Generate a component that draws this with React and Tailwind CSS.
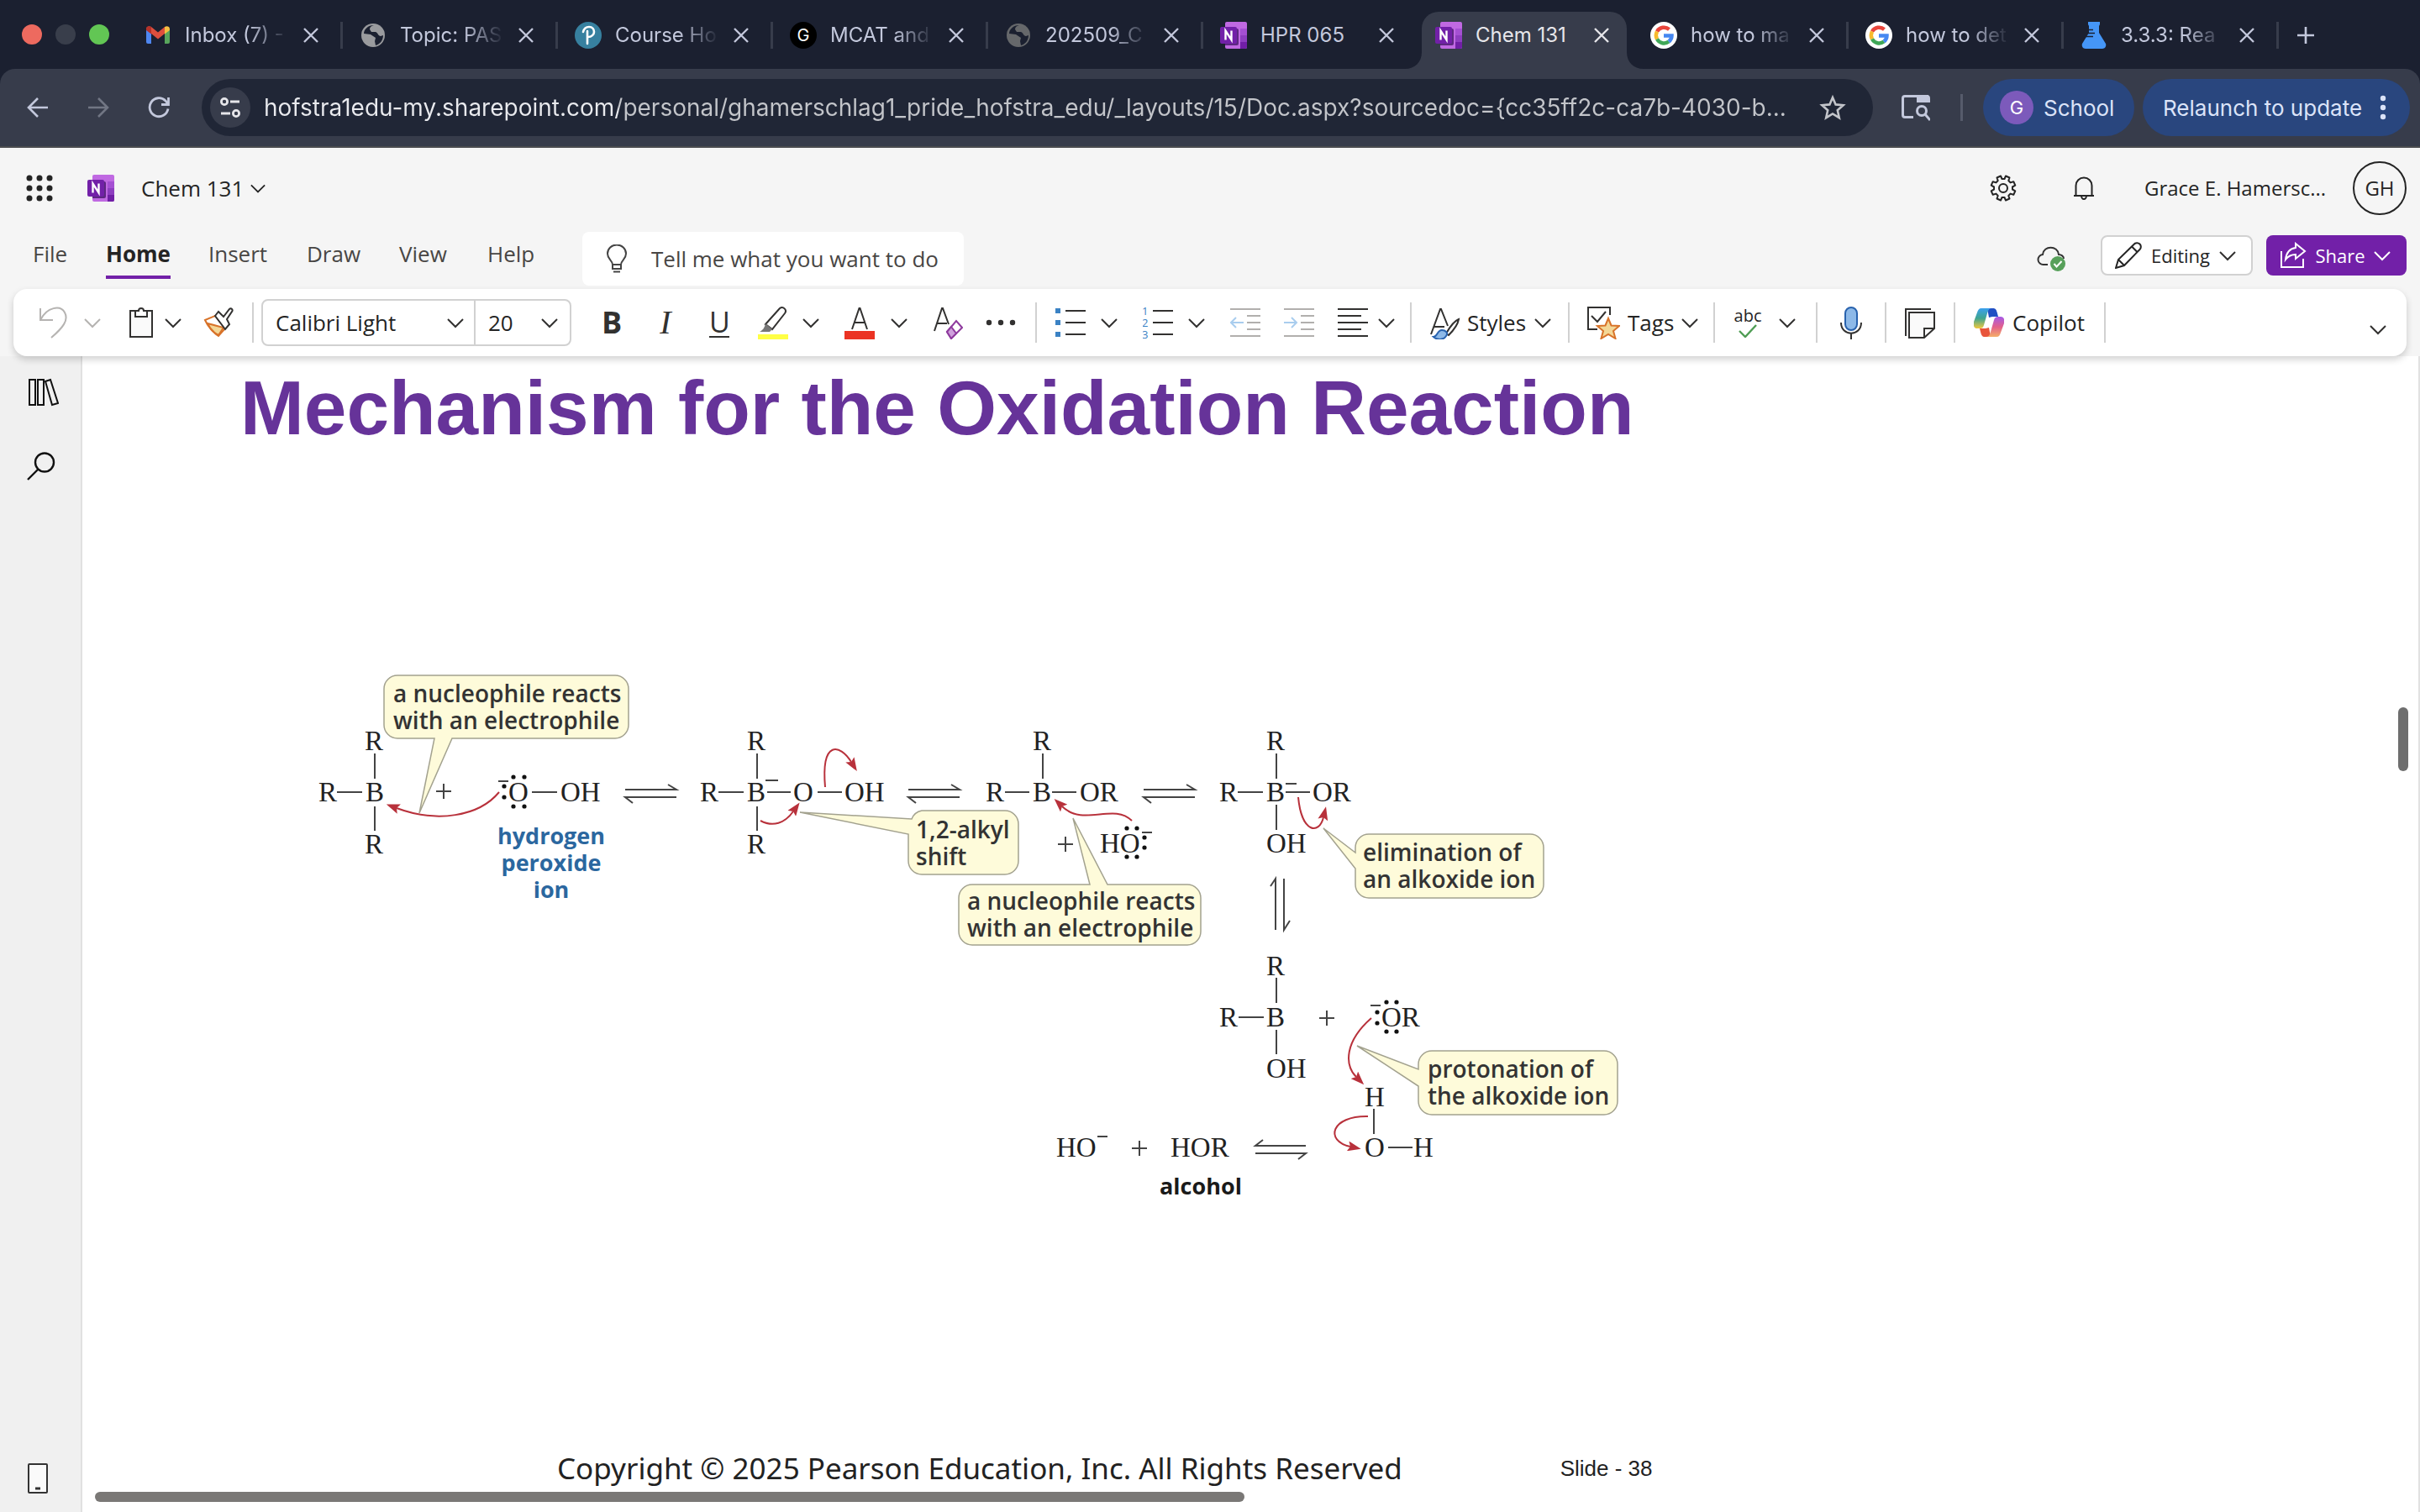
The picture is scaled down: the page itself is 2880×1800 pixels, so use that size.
import React, { useState } from 'react';

/* ---------- shared icons ---------- */

const Chevron = ({ className = 'text-[#323130]' }) => (
  <svg viewBox="0 0 20 20" className={`h-5 w-5 shrink-0 ${className}`} fill="none" stroke="currentColor" strokeWidth="2">
    <path d="M1 6l9 9 9-9" />
  </svg>
);

const OneNoteIcon = () => (
  <svg viewBox="0 0 32 32" className="h-8 w-8 shrink-0">
    <path d="M8 0h22a2 2 0 0 1 2 2v28a2 2 0 0 1-2 2H8a2 2 0 0 1-2-2V2a2 2 0 0 1 2-2z" fill="#c069e2" />
    <path d="M24 8h8v8h-8z" fill="#a550d3" />
    <path d="M24 16h8v8h-8z" fill="#8e3ec0" />
    <path d="M24 24h8v6a2 2 0 0 1-2 2h-6z" fill="#711fa6" />
    <path d="M6 8h14a2 2 0 0 1 2 2v16a2 2 0 0 1-2 2H6z" fill="#3c1360" opacity=".75" />
    <rect y="6" width="20" height="20" rx="2" fill="#7220a8" />
    <path d="M6.500 21.500v-11l7 11v-11" fill="none" stroke="#fff" strokeWidth="2.400" />
  </svg>
);

const GmailIcon = () => (
  <svg viewBox="0 0 32 32" className="h-8 w-8 shrink-0">
    <path d="M2 8l6 5v13H4a2 2 0 0 1-2-2z" fill="#4e86f0" />
    <path d="M30 8l-6 5v13h4a2 2 0 0 0 2-2z" fill="#58a65c" />
    <path d="M2 8.500C2 5 6 4.500 8 6l8 6.500L24 6v8l-8 6.500L8 14z" fill="#dd4f3e" />
    <path d="M2 8.500C2 5 6 4.500 8 6v8.500l-6-4.500z" fill="#b5322a" />
    <path d="M30 8.500C30 5 26 4.500 24 6v8.500l6-4.500z" fill="#f5bf42" />
  </svg>
);

const GlobeIcon = ({ className }) => (
  <svg viewBox="0 0 32 32" className={`h-8 w-8 shrink-0 ${className}`}>
    <circle cx="16" cy="16" r="14" fill="currentColor" />
    <path d="M17 4c-3 1-5 2-5 5l2 3h5c3 1 3 5 6 5l3-1c0 6-4 11-9 12l-1-5 1-4-6-4-8-1C5 9 10 4 17 4z" fill="#1b2030" />
    <path d="M20 6l5 3-1 4-4-2z" fill="currentColor" />
    <path d="M5 19l7 1v3l4 2-1 3C10 27 6 24 5 19z" fill="currentColor" />
  </svg>
);

const PearsonIcon = () => (
  <svg viewBox="0 0 32 32" className="h-8 w-8 shrink-0">
    <circle cx="16" cy="16" r="16" fill="#37809f" />
    <path d="M10 12c1-4 4-6 7-6 4 0 6 3 6 6s-3 6-7 6M15 11v15" fill="none" stroke="#fff" strokeWidth="2.600" strokeLinecap="round" />
  </svg>
);

const LetterIcon = () => (
  <span className="flex h-8 w-8 shrink-0 items-center justify-center rounded-full bg-black text-xl text-white">G</span>
);

const GoogleIcon = () => (
  <svg viewBox="0 0 32 32" className="h-8 w-8 shrink-0" fill="none" strokeWidth="4.500">
    <circle cx="16" cy="16" r="16" fill="#fff" />
    <path d="M8 11.500A9.500 9.500 0 0 1 22.500 9" stroke="#e8453c" />
    <path d="M8 20.500a9.500 9.500 0 0 1 0-9" stroke="#f7bb2d" />
    <path d="M22 23.500A9.500 9.500 0 0 1 8 20.500" stroke="#3fa757" />
    <path d="M16 16.500h9.500c0 3-1.500 5.500-3.500 7" stroke="#4688f1" />
  </svg>
);

const FlaskIcon = () => (
  <svg viewBox="0 0 32 32" className="h-8 w-8 shrink-0">
    <path d="M9 0h14v3l-1 2v8l8 13c1 3-1 6-4 6H6c-3 0-5-3-4-6l8-13V5L9 3z" fill="#4596f7" />
    <path d="M9 9.500h6M9 13.500h8M6 17.500h9" stroke="#1b2030" strokeWidth="1.500" />
  </svg>
);

/* ---------- browser chrome ---------- */

const browserTabs = [
  { title: 'Inbox (7) -', icon: <GmailIcon /> },
  { title: 'Topic: PAS', icon: <GlobeIcon className="text-[#9a9b9e]" /> },
  { title: 'Course Ho', icon: <PearsonIcon /> },
  { title: 'MCAT and', icon: <LetterIcon /> },
  { title: '202509_C', icon: <GlobeIcon className="text-[#66686b]" /> },
  { title: 'HPR 065', icon: <OneNoteIcon />, whole: true },
  { title: 'Chem 131', icon: <OneNoteIcon />, whole: true },
  { title: 'how to ma', icon: <GoogleIcon /> },
  { title: 'how to det', icon: <GoogleIcon /> },
  { title: '3.3.3: Rea', icon: <FlaskIcon /> },
];

const BrowserTab = ({ tab, active, divider, onSelect }) => (
  <div className={`relative flex h-[68px] w-64 shrink-0 items-center ${active ? 'text-[#e6e6ea]' : 'text-[#c3c8dc]'}`}>
    {active && (
      <>
        <span className="absolute inset-y-0 left-1 right-2 rounded-t-[20px] bg-[#373c4b]" />
        <svg viewBox="0 0 20 20" className="absolute -left-4 bottom-0 h-5 w-5" fill="#373c4b">
          <path d="M20 0v20H0C12 20 20 12 20 0z" />
        </svg>
        <svg viewBox="0 0 20 20" className="absolute -right-3 bottom-0 h-5 w-5" fill="#373c4b">
          <path d="M0 0v20h20C8 20 0 12 0 0z" />
        </svg>
      </>
    )}
    <button onClick={onSelect} className="relative ml-5 flex items-center gap-4 pb-3">
      {tab.icon}
      <span
        className={`w-[126px] shrink-0 whitespace-nowrap text-left text-2xl ${
          tab.whole ? '' : '[mask-image:linear-gradient(to_right,black_60%,transparent_98%)]'
        }`}
      >
        {tab.title}
      </span>
    </button>
    <button aria-label={`Close ${tab.title}`} className="relative ml-3.5 pb-3">
      <svg viewBox="0 0 20 20" className="h-5 w-5" fill="none" stroke="currentColor" strokeWidth="2.400">
        <path d="M2 2l16 16M18 2L2 18" />
      </svg>
    </button>
    <span className={`relative mb-3 ml-auto h-8 w-[3px] ${divider ? 'bg-[#373c4b]' : ''}`} />
  </div>
);

const TabStrip = ({ active, setActive }) => (
  <div className="flex items-end bg-[#1b2030] pt-3.5">
    <div className="flex h-[68px] w-[152px] shrink-0 items-center gap-4 pb-3.5 pl-[26px]">
      <span className="h-6 w-6 rounded-full bg-[#ed6a5f]" />
      <span className="h-6 w-6 rounded-full bg-[#393e4b]" />
      <span className="h-6 w-6 rounded-full bg-[#62c654]" />
    </div>
    {browserTabs.map((tab, i) => (
      <BrowserTab
        key={i}
        tab={tab}
        active={i === active}
        divider={i !== active && i !== active - 1}
        onSelect={() => setActive(i)}
      />
    ))}
    <button aria-label="New tab" className="mb-7 ml-5 text-[#c3c8dc]">
      <svg viewBox="0 0 24 24" className="h-6 w-6" fill="none" stroke="currentColor" strokeWidth="2.600">
        <path d="M12 2v20M2 12h20" />
      </svg>
    </button>
  </div>
);

const AddressBar = () => (
  <div className="bg-[#1b2030]">
    <div className="flex h-[94px] items-center rounded-t-[18px] border-b-2 border-[#4b4c50] bg-[#373c4b] pl-8 pr-3 text-[#c3c8dc]">
      <button aria-label="Back">
        <svg viewBox="0 0 26 26" className="h-[26px] w-[26px]" fill="none" stroke="currentColor" strokeWidth="2.600">
          <path d="M25 13H2M13 2L2 13l11 11" />
        </svg>
      </button>
      <button aria-label="Forward" className="ml-[46px] text-[#717684]">
        <svg viewBox="0 0 26 26" className="h-[26px] w-[26px]" fill="none" stroke="currentColor" strokeWidth="2.600">
          <path d="M1 13h23M13 2l11 11-11 11" />
        </svg>
      </button>
      <button aria-label="Reload" className="ml-[46px]">
        <svg viewBox="0 0 26 26" className="h-[26px] w-[26px]" fill="none" stroke="currentColor" strokeWidth="2.800">
          <path d="M24 14.500A11 11 0 1 1 21 5l3 4M24.500 1v8.500H16" />
        </svg>
      </button>
      <div className="ml-[38px] flex h-[68px] min-w-0 flex-1 items-center rounded-full bg-[#202636] pl-2.5 pr-8">
        <button aria-label="View site information" className="flex h-12 w-12 shrink-0 items-center justify-center rounded-full bg-[#373c4b] text-[#e6e6ea]">
          <svg viewBox="0 0 26 26" className="h-[26px] w-[26px]" fill="none" stroke="currentColor" strokeWidth="2.800">
            <circle cx="6" cy="6" r="3.600" />
            <path d="M13 6h11M2 20h11" />
            <circle cx="20" cy="20" r="3.600" />
          </svg>
        </button>
        <input
          aria-label="Address"
          defaultValue="hofstra1edu-my.sharepoint.com/personal/ghamerschlag1_pride_hofstra_edu/_layouts/15/Doc.aspx?sourcedoc={cc35ff2c-ca7b-4030-b..."
          className="ml-4 min-w-0 flex-1 bg-[linear-gradient(to_right,#e9eaee_422px,#c3c5ca_422px)] bg-clip-text text-[28px] text-transparent outline-none"
        />
        <button aria-label="Bookmark this tab" className="ml-4 text-[#c3c5ca]">
          <svg viewBox="0 0 32 32" className="h-8 w-8" fill="none" stroke="currentColor" strokeWidth="2.600">
            <path d="M16 4l3.600 8.400 9 .8-6.800 6 2 9L16 23.500 8.200 28.200l2-9-6.800-6 9-.8z" />
          </svg>
        </button>
      </div>
      <button aria-label="Search this page" className="ml-8">
        <svg viewBox="0 0 36 32" className="h-8 w-9" fill="none" stroke="currentColor" strokeWidth="3">
          <path d="M16 27.500H6a2.500 2.500 0 0 1-2.500-2.500V5A2.500 2.500 0 0 1 6 2.500h26a2.500 2.500 0 0 1 2.500 2.500v5" />
          <path d="M20 1h14v9H20z" fill="currentColor" stroke="none" />
          <circle cx="26" cy="20" r="5.500" />
          <path d="M30 24l6 7" />
        </svg>
      </button>
      <span className="ml-9 h-8 w-[3px] bg-[#565b6b]" />
      <button className="ml-6 flex h-[68px] w-[180px] items-center gap-3 rounded-full bg-[#29467e] pl-5 text-[26px] text-[#dbe3f8]">
        <span className="flex h-10 w-10 items-center justify-center rounded-full bg-[#7c5abb] text-[22px] text-white">G</span>
        School
      </button>
      <button className="ml-2.5 flex h-[68px] w-[318px] items-center justify-between whitespace-nowrap rounded-full bg-[#29467e] pl-6 pr-7 text-[26px] text-[#dbe3f8]">
        Relaunch to update
        <svg viewBox="0 0 8 30" className="h-[30px] w-2" fill="currentColor">
          <circle cx="4" cy="4" r="3.200" />
          <circle cx="4" cy="15" r="3.200" />
          <circle cx="4" cy="26" r="3.200" />
        </svg>
      </button>
    </div>
  </div>
);

/* ---------- OneNote header ---------- */

const AppHeader = () => (
  <header className="flex h-[92px] items-center pl-[30px] pr-4 pt-1 text-[26px] text-[#242424]">
    <button aria-label="App launcher">
      <svg viewBox="0 0 34 34" className="h-[34px] w-[34px]" fill="#242424">
        {[5, 17, 29].map((y) => [5, 17, 29].map((x) => <circle key={`${x}-${y}`} cx={x} cy={y} r="3.500" />))}
      </svg>
    </button>
    <span className="ml-10"><OneNoteIcon /></span>
    <button className="ml-8 flex items-center gap-2">
      Chem 131
      <svg viewBox="0 0 20 20" className="h-[18px] w-[18px]" fill="none" stroke="currentColor" strokeWidth="2">
        <path d="M1 6l9 9 9-9" />
      </svg>
    </button>
    <button aria-label="Settings" className="ml-auto">
      <svg viewBox="0 0 32 32" className="h-8 w-8" fill="none" stroke="#242424" strokeWidth="2" strokeLinejoin="round">
        <path d="M13 1.500L14.500 5h3L19 1.500l4.500 2L22.300 7l2.200 2.400 3.800-1.200 2 4.500L27 14.500v3l3.300 1.800-2 4.500-3.800-1.200-2.200 2.400 1.200 3.500-4.500 2L17.500 27h-3L13 30.500l-4.500-2L9.700 25l-2.200-2.400-3.800 1.200-2-4.500L5 17.500v-3l-3.300-1.800 2-4.500 3.800 1.200L9.700 7 8.500 3.500z" />
        <circle cx="16" cy="16" r="5" />
      </svg>
    </button>
    <button aria-label="Notifications" className="ml-16">
      <svg viewBox="0 0 32 32" className="h-8 w-8" fill="none" stroke="#242424" strokeWidth="2">
        <path d="M4 25h24M6.500 25V13a9.500 9.500 0 0 1 19 0v12" />
        <path d="M13 25a3 4 0 0 0 6 0" />
      </svg>
    </button>
    <span className="ml-14 w-[218px] whitespace-nowrap text-2xl">Grace E. Hamersc...</span>
    <button aria-label="Account" className="ml-[30px] h-16 w-16 rounded-full border-2 border-[#242424] text-2xl">GH</button>
  </header>
);

const ribbonTabs = [
  { name: 'File', style: 'w-[87px]' },
  { name: 'Home', style: 'w-[122px]' },
  { name: 'Insert', style: 'w-[117px]' },
  { name: 'Draw', style: 'w-[110px]' },
  { name: 'View', style: 'w-[105px]' },
  { name: 'Help', style: 'w-[113px]' },
];

const RibbonTabs = () => {
  const [current, setCurrent] = useState('Home');

  return (
    <nav className="flex h-[76px] items-center pl-[39px] pr-4">
      {ribbonTabs.map((tab) => (
        <div key={tab.name} className={`flex shrink-0 ${tab.style}`}>
          <button
            onClick={() => setCurrent(tab.name)}
            className={`border-b-4 pb-2 pt-1 text-[26px] leading-9 ${
              current === tab.name ? 'border-[#7220a8] font-bold text-[#242424]' : 'border-transparent text-[#484644]'
            }`}
          >
            {tab.name}
          </button>
        </div>
      ))}
      <label className="mt-1 flex h-16 w-[454px] items-center gap-7 rounded-lg bg-white pl-7">
        <svg viewBox="0 0 26 34" className="h-[34px] w-[26px] shrink-0" fill="none" stroke="#444" strokeWidth="2">
          <path d="M8 24c0-5-6-6-6-13a11 10.500 0 0 1 22 0c0 7-6 8-6 13zM8 24v5h10v-5M9 32.500h8" />
        </svg>
        <input
          aria-label="Tell me what you want to do"
          placeholder="Tell me what you want to do"
          className="w-[360px] text-[26px] outline-none placeholder:text-[#484644]"
        />
      </label>
      <svg viewBox="0 0 36 32" className="ml-auto mt-1 h-8 w-9" fill="none" stroke="#333" strokeWidth="2">
        <path d="M13 23H8a6 6 0 0 1-1-12c1-11 18-11 19 0 3 0 6 2 6 5" />
        <circle cx="25" cy="22" r="9" fill="#57a05a" stroke="none" />
        <path d="M20.500 22l3 3.500 6-6.500" stroke="#fff" />
      </svg>
      <button className="mb-1 ml-10 flex h-12 w-[181px] items-center gap-2 rounded-lg border-2 border-[#d1d1d1] bg-white pl-[15px] text-[22px] text-[#242424]">
        <svg viewBox="0 0 32 32" className="h-8 w-8 shrink-0" fill="none" stroke="#242424" strokeWidth="2">
          <path d="M1 31l3-10L23 2.500a4.500 4.500 0 0 1 6.500 6.500L11 28zM4 21l7 7M20 5.500l6.500 6.500" />
        </svg>
        <span className="w-[76px]">Editing</span>
        <Chevron />
      </button>
      <button className="mb-1 ml-4 flex h-12 w-[167px] items-center gap-2.5 rounded-lg bg-[#7220a8] pl-4 text-[22px] text-white">
        <svg viewBox="0 0 32 32" className="h-8 w-8 shrink-0" fill="none" stroke="#fff" strokeWidth="2">
          <path d="M2 11v19h26V20M19 2l11 9-11 9v-5c-6 0-9 2-12 6 1-9 5-13 12-14z" />
        </svg>
        <span className="w-[60px]">Share</span>
        <Chevron className="text-white" />
      </button>
    </nav>
  );
};

/* ---------- ribbon ---------- */

const Sep = ({ className }) => <span className={`h-12 w-0.5 shrink-0 bg-[#d1d1d1] ${className}`} />;

const Tool = ({ label, className, children }) => (
  <button aria-label={label} className={`shrink-0 ${className}`}>
    <svg viewBox="0 0 36 40" className="h-10 w-9" fill="none" stroke="#323130" strokeWidth="2">
      {children}
    </svg>
  </button>
);

const Drop = ({ label, className, tone }) => (
  <button aria-label={label} className={`shrink-0 ${className}`}>
    <Chevron className={tone} />
  </button>
);

const Ribbon = () => (
  <div className="relative z-10 mx-4 flex h-20 items-center rounded-2xl bg-white pl-[30px] pr-6 text-[26px] text-[#242424] shadow-[0_4px_8px_rgba(0,0,0,0.18)]">
    <Tool label="Undo">
      <path d="M2 3v14h15M2 17C10 1 26-1 31 8c5 9-2 18-16 30" stroke="#b5b3b1" />
    </Tool>
    <Drop label="Undo history" className="ml-[18px]" tone="text-[#b5b3b1]" />
    <Tool label="Paste" className="ml-[30px]">
      <path d="M12 6H5v31h26V6h-7" fill="#fafafa" />
      <path d="M11 13V6h4c0-4 6-4 6 0h4v7z" fill="#fff" />
    </Tool>
    <Drop label="Paste options" className="ml-2.5" />
    <Tool label="Format painter" className="ml-[26px]">
      <path d="M2 17l12-5 12 15-8 9C12 32 5 24 2 17z" fill="#fff" stroke="#d8732a" />
      <path d="M5 21l19 5-6 9C14 33 8 28 5 21z" fill="#f3d796" stroke="#d8732a" />
      <path d="M14 12l4-5 6 6 7-9c2-2 5 1 3 3l-6 9 3 6-5 6z" fill="#fff" />
    </Tool>
    <Sep className="ml-[22px]" />
    <div className="ml-[9px] flex h-14 w-[369px] shrink-0 rounded-lg border-2 border-[#d1d1d1]">
      <label className="relative flex w-[253px] items-center border-r-2 border-[#d1d1d1]">
        <select aria-label="Font" className="h-full w-full appearance-none pl-[15px] outline-none">
          <option>Calibri Light</option>
        </select>
        <span className="pointer-events-none absolute right-3"><Chevron /></span>
      </label>
      <label className="relative flex flex-1 items-center">
        <select aria-label="Font size" className="h-full w-full appearance-none pl-[15px] outline-none">
          <option>20</option>
        </select>
        <span className="pointer-events-none absolute right-3.5"><Chevron /></span>
      </label>
    </div>
    <button aria-label="Bold" className="ml-[30px] w-9 shrink-0 text-[36px] font-bold leading-10 text-[#323130]">B</button>
    <button aria-label="Italic" className="ml-7 w-9 shrink-0 font-['Liberation_Serif',serif] text-[40px] italic leading-10 text-[#323130]">I</button>
    <button aria-label="Underline" className="ml-7 flex w-9 shrink-0 justify-center">
      <span className="w-6 border-b-2 border-[#323130] text-[34px] leading-[34px] text-[#323130]">U</span>
    </button>
    <Tool label="Highlight" className="ml-7">
      <path d="M9 22L26 3c4-3 9 2 6 6L17 28z" fill="#fff" />
      <path d="M9 21l8 7-3 3H2c4-2 6-5 7-10z" fill="#777" stroke="none" />
      <path d="M0 34h36v6H0z" fill="#ffff45" stroke="none" />
    </Tool>
    <Drop label="Highlight colours" className="ml-[17px]" />
    <Tool label="Font colour" className="ml-[30px]">
      <path d="M9 28L17.500 3h1L27 28M12 20h12" />
      <path d="M0 30h36v10H0z" fill="#eb3323" stroke="none" />
    </Tool>
    <Drop label="Font colours" className="ml-[19px]" />
    <Tool label="Clear formatting" className="ml-[30px]">
      <path d="M2 30L11 3h1l7 19M5 21h12" />
      <path d="M17 31L28 18l7 8-13 13z" fill="#fff" stroke="#8f3b9e" />
      <path d="M17 31l5-6 6 8-6 6z" fill="#cfa0dc" stroke="#8f3b9e" />
    </Tool>
    <Tool label="More font options" className="ml-[27px]">
      <g fill="#323130" stroke="none">
        <circle cx="4" cy="20" r="3.200" />
        <circle cx="18" cy="20" r="3.200" />
        <circle cx="32" cy="20" r="3.200" />
      </g>
    </Tool>
    <Sep className="ml-[23px]" />
    <Tool label="Bullets" className="ml-[22px]">
      <path d="M12 6h24M12 20h24M12 34h24" />
      <path d="M0 3h6v6H0zM0 17h6v6H0zM0 31h6v6H0z" fill="#3b82c4" stroke="none" />
    </Tool>
    <Drop label="Bullet styles" className="ml-[18px]" />
    <Tool label="Numbering" className="ml-[30px]">
      <path d="M12 6h24M12 20h24M12 34h24" />
      <g fill="#3b82c4" stroke="none" className="text-[13px]">
        <text x="-1" y="11">1</text>
        <text x="-1" y="25">2</text>
        <text x="-1" y="39">3</text>
      </g>
    </Tool>
    <Drop label="Number styles" className="ml-[18px]" />
    <Tool label="Decrease indent" className="ml-[30px]">
      <path d="M0 4h36M20 12h16M20 20h16M20 28h16M0 36h36" stroke="#b1afad" />
      <path d="M16 20H1M7 14l-6 6 6 6" stroke="#a9cdee" />
    </Tool>
    <Tool label="Increase indent" className="ml-7">
      <path d="M0 4h36M20 12h16M20 20h16M20 28h16M0 36h36" stroke="#b1afad" />
      <path d="M0 20h15M9 14l6 6-6 6" stroke="#a9cdee" />
    </Tool>
    <Tool label="Align" className="ml-7">
      <path d="M0 4h36M0 12h28M0 20h36M0 28h28M0 36h36" />
    </Tool>
    <Drop label="Align options" className="ml-3" />
    <Sep className="ml-[18px]" />
    <Tool label="Styles gallery" className="ml-[22px]">
      <path d="M1 34L12 4h1l8 20M5 25h12" />
      <path d="M34 16c-5 2-11 10-15 17l3 2c6-6 11-13 12-19z" fill="#fff" />
      <path d="M4 37c5 0 4-8 10-8 4 0 8 3 5 7-3 5-11 5-15 1z" fill="#8db9e8" stroke="#2862ae" />
    </Tool>
    <button className="ml-2 flex w-[100px] shrink-0 items-center justify-between">
      Styles
      <Chevron />
    </button>
    <Sep className="ml-5" />
    <button aria-label="Tag gallery" className="ml-5 shrink-0">
      <svg viewBox="0 0 40 40" className="h-10 w-10" fill="none" stroke="#323130" strokeWidth="2">
        <path d="M13 28H2V2h26v9M6 12l7 7 10-12" />
        <path d="M26 15l3.500 8.500 9.500.5-7 6 2.500 9L26 34l-8.500 5 2.500-9-7-6 9.500-.5z" fill="#f3d796" stroke="#d8732a" />
      </svg>
    </button>
    <button className="ml-[9px] flex w-[84px] shrink-0 items-center justify-between">
      Tags
      <Chevron />
    </button>
    <Sep className="ml-[18px]" />
    <button aria-label="Spelling" className="ml-[21px] flex w-9 shrink-0 flex-col items-center text-xl leading-5">
      abc
      <svg viewBox="0 0 22 16" className="h-4 w-[22px]" fill="none" stroke="#4f9d54" strokeWidth="2.400">
        <path d="M1 8l7 7L21 1" />
      </svg>
    </button>
    <Drop label="Spelling options" className="ml-[19px]" />
    <Sep className="ml-6" />
    <Tool label="Dictate" className="ml-[22px]">
      <rect x="11" y="2" width="14" height="27" rx="7" fill="#8db9e8" stroke="#2862ae" />
      <path d="M6 20c0 17 24 17 24 0M18 33v7" />
    </Tool>
    <Sep className="ml-[22px]" />
    <Tool label="Feed" className="ml-[22px]">
      <path d="M1 36V4h30" />
      <path d="M5 8h30v19l-12 11H5zM35 27H23v11" fill="#fafafa" />
    </Tool>
    <Sep className="ml-[22px]" />
    <button className="ml-[22px] flex shrink-0 items-center gap-2.5">
      <svg viewBox="0 0 36 34" className="h-[34px] w-9">
        <defs>
          <linearGradient id="coolSide" x1="0" y1="0" x2="0" y2="1">
            <stop offset="0" stopColor="#3aa0ee" />
            <stop offset=".5" stopColor="#3fa58f" />
            <stop offset="1" stopColor="#f3c93c" />
          </linearGradient>
          <linearGradient id="warmSide" x1="0" y1="0" x2="0" y2="1">
            <stop offset="0" stopColor="#a65ae8" />
            <stop offset=".5" stopColor="#e2608c" />
            <stop offset="1" stopColor="#f4ae68" />
          </linearGradient>
        </defs>
        <path d="M16 0h7c3 0 4 2 5 6l1 4h-7l-4 1z" fill="#2150c4" />
        <path d="M20 34h-7c-3 0-4-2-5-6l-1-4h7l4-1z" fill="#e8553b" />
        <path d="M9 0h12c-3 0-4 3-5 6l-4 14c-1 3-2 4-5 4H4c-4 0-5-4-4-8L4 5c1-3 2-5 5-5z" fill="url(#coolSide)" />
        <path d="M27 34H15c3 0 4-3 5-6l4-14c1-3 2-4 5-4h3c4 0 5 4 4 8l-4 11c-1 3-2 5-5 5z" fill="url(#warmSide)" />
      </svg>
      <span className="w-[90px] text-left">Copilot</span>
    </button>
    <Sep className="ml-[19px]" />
    <Drop label="Ribbon layout" className="ml-auto pt-4" />
  </div>
);

/* ---------- slide ---------- */

const bonds = [
  // trialkylborane and hydroperoxide
  'M401 943h30M446 897v30M446 960v29M633 943h30M593 930h12',
  // borate intermediate
  'M855 943h30M901 897v30M901 960v29M913 943h28M973 943h29M911 929h15',
  // borate ester
  'M1196 943h29M1241 897v30M1252 943h29M1359 991h12',
  // hydroxide adduct
  'M1473 943h30M1519 897v30M1530 943h29M1519 958v30M1530 933h13',
  // borinic acid and alkoxide
  'M1474 1211h30M1519 1164v30M1519 1226v29M1631 1197h12',
  // water and hydroxide
  'M1635 1320v30M1652 1366h29M1306 1353h12',
];

const equilibria = [
  'M744 940h61l-10-6M805 949h-61l9 7',
  'M1081 940h61l-10-6M1142 949h-61l9 7',
  'M1361 940h61l-10-6M1422 949h-61l9 7',
  'M1518 1107v-61l-6 9M1528 1046v61l7-11',
  'M1554 1364h-60l9-7M1494 1373h60l-9 7',
];

const atoms = [
  ['R', 434, 893], ['R', 379, 954], ['B', 435, 954], ['R', 434, 1016], ['O', 605, 954], ['OH', 667, 954],
  ['R', 889, 893], ['R', 833, 954], ['B', 889, 954], ['R', 889, 1016], ['O', 944, 954], ['OH', 1005, 954],
  ['R', 1229, 893], ['R', 1173, 954], ['B', 1229, 954], ['OR', 1285, 954], ['HO', 1309, 1015],
  ['R', 1507, 893], ['R', 1451, 954], ['B', 1507, 954], ['OR', 1562, 954], ['OH', 1507, 1015],
  ['R', 1507, 1161], ['R', 1451, 1222], ['B', 1507, 1222], ['OH', 1507, 1283], ['OR', 1644, 1222],
  ['H', 1624, 1317], ['O', 1624, 1377], ['H', 1682, 1377], ['HO', 1257, 1377], ['HOR', 1393, 1377],
];

const pluses = [[528, 942], [1268, 1005], [1579, 1212], [1356, 1367]];

const lonePairs = [
  [611, 925], [624, 925], [611, 960], [624, 960], [600, 936], [600, 949],
  [1341, 986], [1353, 986], [1341, 1020], [1353, 1020], [1362, 997], [1362, 1009],
  [1650, 1193], [1662, 1193], [1650, 1228], [1662, 1228], [1639, 1205], [1639, 1218],
];

const electronArrows = [
  'M594 943C570 972 520 980 472 962',
  'M982 937C977 880 1000 886 1013 907',
  'M905 977C920 985 934 980 944 966',
  'M1347 977C1325 955 1290 985 1264 960',
  'M1545 949C1549 992 1570 994 1575 973',
  'M1632 1212C1600 1240 1600 1268 1614 1282',
  'M1628 1329C1584 1328 1576 1358 1607 1365',
];

const callouts = [
  {
    outline: 'M517 879H473a16 16 0 0 1-16-16V820a16 16 0 0 1 16-16H732a16 16 0 0 1 16 16V863a16 16 0 0 1-16 16H538L499 968z',
    x: 468, y: 836, lines: ['a nucleophile reacts', 'with an electrophile'],
  },
  {
    outline: 'M1085 975a16 16 0 0 1 12-10H1196a16 16 0 0 1 16 16V1025a16 16 0 0 1-16 16H1097a16 16 0 0 1-16-16V993L952 967z',
    x: 1090, y: 998, lines: ['1,2-alkyl', 'shift'],
  },
  {
    outline: 'M1318 1053H1413a16 16 0 0 1 16 16V1109a16 16 0 0 1-16 16H1157a16 16 0 0 1-16-16V1069a16 16 0 0 1 16-16H1297L1277 974z',
    x: 1151, y: 1083, lines: ['a nucleophile reacts', 'with an electrophile'],
  },
  {
    outline: 'M1613 1015V1009a16 16 0 0 1 16-16H1821a16 16 0 0 1 16 16V1053a16 16 0 0 1-16 16H1629a16 16 0 0 1-16-16V1034L1575 986z',
    x: 1622, y: 1025, lines: ['elimination of', 'an alkoxide ion'],
  },
  {
    outline: 'M1688 1273V1267a16 16 0 0 1 16-16H1909a16 16 0 0 1 16 16V1311a16 16 0 0 1-16 16H1704a16 16 0 0 1-16-16V1293L1615 1245z',
    x: 1699, y: 1283, lines: ['protonation of', 'the alkoxide ion'],
  },
];

const Mechanism = () => (
  <svg viewBox="360 780 1600 680" className="h-[680px] w-[1600px] shrink-0">
    <defs>
      <marker id="head" viewBox="0 0 16 12" refX="3" refY="6" markerWidth="16" markerHeight="12" markerUnits="userSpaceOnUse" orient="auto">
        <path d="M0 0l16 6-16 6 3-6z" fill="#b8313b" />
      </marker>
    </defs>
    {callouts.map((c) => (
      <g key={c.outline}>
        <path d={c.outline} fill="#fefbda" stroke="#a3a28f" strokeWidth="1.500" />
        <g className="text-[28px] font-semibold" fill="#333">
          {c.lines.map((line, i) => (
            <text key={line} x={c.x} y={c.y + i * 32}>{line}</text>
          ))}
        </g>
      </g>
    ))}
    <g fill="none" stroke="#444" strokeWidth="2">
      {bonds.map((d) => <path key={d} d={d} />)}
      {equilibria.map((d) => <path key={d} d={d} />)}
      {pluses.map(([x, y]) => <path key={x} d={`M${x - 9} ${y}h18M${x} ${y - 9}v18`} />)}
    </g>
    <g className="font-['Liberation_Serif',serif] text-[33px]" fill="#222">
      {atoms.map(([label, x, y]) => (
        <text key={`${x}-${y}`} x={x} y={y}>{label}</text>
      ))}
    </g>
    <g fill="#111">
      {lonePairs.map(([x, y]) => <circle key={`${x}-${y}`} cx={x} cy={y} r="2.600" />)}
    </g>
    <g fill="none" stroke="#b8313b" strokeWidth="2">
      {electronArrows.map((d) => <path key={d} d={d} markerEnd="url(#head)" />)}
    </g>
    <g className="text-[27px] font-bold" textAnchor="middle">
      <g fill="#2b679f">
        <text x="656" y="1005">hydrogen</text>
        <text x="656" y="1037">peroxide</text>
        <text x="656" y="1069">ion</text>
      </g>
      <text x="1429" y="1422" fill="#1a1a1a">alcohol</text>
    </g>
  </svg>
);

const SideRail = () => (
  <aside className="flex w-[98px] shrink-0 flex-col items-start border-r-2 border-[#e1e1e1] bg-[#f0f0f0] pb-[22px] pl-8 pt-[26px]">
    <button aria-label="Show navigation">
      <svg viewBox="0 0 38 34" className="h-[34px] w-[38px]" fill="none" stroke="#111" strokeWidth="2">
        <path d="M3 2h7v30H3zM13 2h7v30h-7zM22 4l6-2 9 28-7 2z" />
      </svg>
    </button>
    <button aria-label="Search notebooks" className="mt-[54px]">
      <svg viewBox="0 0 34 34" className="h-[34px] w-[34px]" fill="none" stroke="#111" strokeWidth="2.400">
        <circle cx="21" cy="12.500" r="11" />
        <path d="M13.500 20.500L1 33" />
      </svg>
    </button>
    <button aria-label="Open on phone" className="mt-auto">
      <svg viewBox="0 0 26 36" className="h-9 w-[26px]" fill="#fafafa" stroke="#333" strokeWidth="2">
        <rect x="2" y="1" width="22" height="34" rx="1" />
        <path d="M10 30h6" strokeWidth="3" />
      </svg>
    </button>
  </aside>
);

const Slide = () => (
  <section className="relative flex min-w-0 flex-1 flex-col overflow-hidden border-r-2 border-[#e1e1e1] bg-white">
    <h1 className="whitespace-nowrap pl-[188px] pt-[10px] font-['Liberation_Sans',sans-serif] text-[91px] font-bold leading-[104px] text-[#663399]">
      Mechanism for the Oxidation Reaction
    </h1>
    <div className="flex pl-[262px] pt-[242px]">
      <Mechanism />
    </div>
    <div className="mt-auto flex items-center gap-[188px] whitespace-nowrap pl-[565px] text-[#222]">
      <p className="font-['Noto_Sans',sans-serif] text-[35px] leading-[40px]">
        Copyright © 2025 Pearson Education, Inc. All Rights Reserved
      </p>
      <p className="font-['Liberation_Sans',sans-serif] text-[26px] leading-8">Slide - 38</p>
    </div>
    <div className="mb-3 ml-[15px] mt-2 h-3 w-[1368px] shrink-0 rounded-full bg-[#7a7876]" />
    <span className="absolute right-3 top-[418px] h-[76px] w-3 rounded-full bg-[#6e6e6e]" />
  </section>
);

const App = () => {
  const [activeTab, setActiveTab] = useState(6);

  return (
    <div className="flex min-h-screen flex-col overflow-hidden bg-[#f5f5f5] font-['Open_Sans','Noto_Sans',sans-serif]">
      <div className="font-['Inter',sans-serif]">
        <TabStrip active={activeTab} setActive={setActiveTab} />
        <AddressBar />
      </div>
      <AppHeader />
      <RibbonTabs />
      <Ribbon />
      <main className="flex flex-1">
        <SideRail />
        <Slide />
      </main>
    </div>
  );
};

export default App;
